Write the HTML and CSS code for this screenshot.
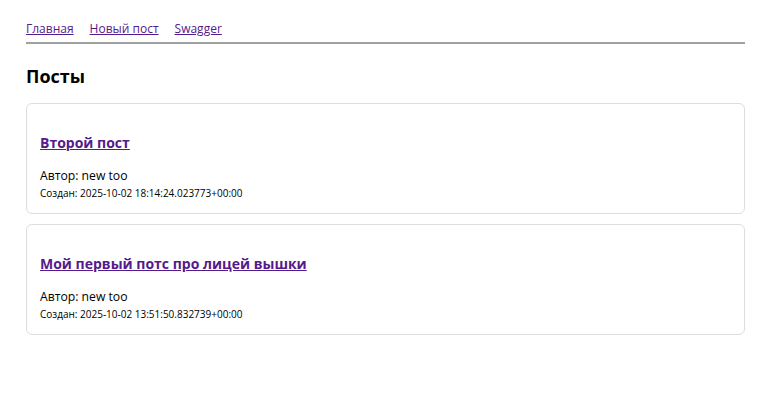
FILE: index.html
```html
<!DOCTYPE html>
<html lang="ru">
<head>
<meta charset="utf-8">
<link rel="stylesheet" href="styles.css">
</head>
<body>
<div class="page">
  <nav class="nav">
    <a href="#">Главная</a>
    <a href="#">Новый пост</a>
    <a href="#">Swagger</a>
  </nav>
  <hr class="rule">
  <h2 class="heading">Посты</h2>
  <div class="card">
    <h3 class="title"><a href="#">Второй пост</a></h3>
    <p class="author">Автор: new too</p>
    <p class="created">Создан: 2025-10-02 18:14:24.023773+00:00</p>
  </div>
  <div class="card">
    <h3 class="title"><a href="#">Мой первый потс про лицей вышки</a></h3>
    <p class="author">Автор: new too</p>
    <p class="created">Создан: 2025-10-02 13:51:50.832739+00:00</p>
  </div>
</div>
</body>
</html>
```
FILE: styles.css
```css
html, body {
  margin: 0;
  background: #fff;
}
body {
  font-family: "Open Sans", "Noto Sans", sans-serif;
  color: #000;
}
.page {
  padding: 20px 30px 0 26px;
}
.nav {
  display: flex;
  gap: 16px;
  font-size: 12px;
  line-height: 18px;
}
.nav a {
  color: #551a8b;
  text-decoration: underline;
}
.rule {
  margin: 4px 0 0;
  border: 0;
  border-top: 2px solid #a0a0a0;
  height: 0;
}
.heading {
  font-size: 18px;
  line-height: 24px;
  margin: 20px 0 15px;
  font-weight: 700;
}
.card {
  border: 1px solid #ddd;
  border-radius: 6px;
  padding: 1px 13px 12px;
  margin-bottom: 10px;
}
.title {
  font-size: 14px;
  line-height: 20px;
  margin: 28px 0 14px;
}
.title a {
  color: #551a8b;
}
.author {
  margin: 0;
  font-size: 12.2px;
  line-height: 18px;
}
.created {
  margin: 0;
  font-size: 10px;
  line-height: 16px;
}
```
